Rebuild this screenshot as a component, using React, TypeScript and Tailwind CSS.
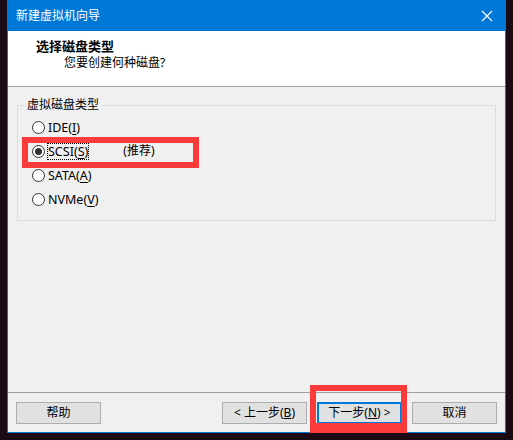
import React from "react";

const font = { fontFamily: '"Noto Sans", "Noto Sans CJK SC", sans-serif' };

function Radio({ checked }: { checked?: boolean }) {
  return (
    <span className="flex h-[13px] w-[13px] shrink-0 items-center justify-center rounded-full border border-[#333] bg-white">
      {checked && <span className="h-[7px] w-[7px] rounded-full bg-[#333]" />}
    </span>
  );
}

function Option({ label, hot, checked, extra }: { label: string; hot: string; checked?: boolean; extra?: string }) {
  return (
    <div className="flex h-[24px] items-center">
      <Radio checked={checked} />
      <span className={`ml-[3px] text-[12.5px] leading-[15px] ${checked ? "outline outline-1 outline-dotted outline-black" : ""}`}>
        {label}(<u className="underline-offset-2">{hot}</u>)
      </span>
      {extra && <span className="ml-[35px]">{extra}</span>}
    </div>
  );
}

function Btn({ children, primary, className = "" }: { children: React.ReactNode; primary?: boolean; className?: string }) {
  return (
    <button
      type="button"
      className={`flex h-[22px] w-[85px] items-center justify-center bg-[#e1e1e1] text-[12px] text-black ${
        primary ? "border-2 border-[#0078d7]" : "border border-[#adadad]"
      } ${className}`}
    >
      {children}
    </button>
  );
}

export default function App() {
  return (
    <div className="relative h-[440px] w-[513px] overflow-hidden bg-[#1b0a14] pl-[7px]" style={font}>
      <div className="flex h-[433px] w-[499px] flex-col border-x border-b border-[#0078d7] bg-[#f0f0f0] text-[12px] text-black">
        {/* title bar */}
        <div className="-mx-px flex h-[31px] shrink-0 items-center justify-between bg-[#0078d7] pl-[9px] pr-[10px] text-white">
          <span className="text-[12px]">新建虚拟机向导</span>
          <svg width="12" height="12" viewBox="0 0 12 12" className="mr-[3px]">
            <path d="M1 1L11 11M11 1L1 11" stroke="white" strokeWidth="1.2" />
          </svg>
        </div>

        {/* header */}
        <div className="h-[56px] shrink-0 border-b border-[#a0a0a0] bg-white pl-[28px] pt-[7px]">
          <div className="text-[13px] font-bold leading-[16px]">选择磁盘类型</div>
          <div className="ml-[28px] mt-[1px] leading-[16px]">您要创建何种磁盘?</div>
        </div>

        {/* body */}
        <div className="flex-1 px-[9px] pt-[10px]">
          <fieldset className="h-[124px] border border-[#dcdcdc] px-[14px] pb-0 pt-[2px]">
            <legend className="-ml-[8px] px-[3px] leading-[16px]">虚拟磁盘类型</legend>
            <Option label="IDE" hot="I" />
            <Option label="SCSI" hot="S" checked extra="(推荐)" />
            <Option label="SATA" hot="A" />
            <Option label="NVMe" hot="V" />
          </fieldset>
        </div>

        {/* footer */}
        <div className="flex h-[40px] shrink-0 items-center border-t border-[#a0a0a0] pl-[8px] pr-[8px]">
          <Btn>帮助</Btn>
          <div className="ml-auto flex gap-[10px]">
            <Btn>
              &lt; 上一步(<u>B</u>)
            </Btn>
            <Btn primary>
              下一步(<u>N</u>) &gt;
            </Btn>
            <Btn>取消</Btn>
          </div>
        </div>
      </div>

      {/* annotation boxes */}
      <div className="absolute left-[22px] top-[137px] h-[31px] w-[177px] border-[6px] border-[#fb3a3a]" />
      <div className="absolute left-[310px] top-[385px] h-[48px] w-[97px] border-[6px] border-b-[10px] border-[#fb3a3a]" />
    </div>
  );
}
